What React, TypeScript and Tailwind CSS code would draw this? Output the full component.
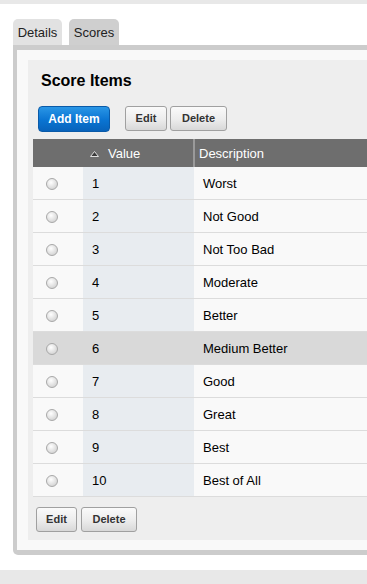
import React from "react";

const rows = [
  ["1", "Worst"],
  ["2", "Not Good"],
  ["3", "Not Too Bad"],
  ["4", "Moderate"],
  ["5", "Better"],
  ["6", "Medium Better"],
  ["7", "Good"],
  ["8", "Great"],
  ["9", "Best"],
  ["10", "Best of All"],
];

function Radio() {
  return (
    <span className="block w-[12px] h-[12px] rounded-full border border-[#a8a8a8] bg-[radial-gradient(circle_at_40%_35%,#ffffff_0%,#e6e6e6_45%,#c8c8c8_100%)]" />
  );
}

function GrayButton({ children, w }: { children: React.ReactNode; w: string }) {
  return (
    <button
      className={`${w} h-[25px] rounded-[3px] border border-[#a0a0a0] bg-[linear-gradient(#fafafa,#ececec_55%,#d8d8d8)] text-[11px] font-bold text-[#333] leading-none`}
    >
      {children}
    </button>
  );
}

export default function App() {
  return (
    <div
      className="w-[367px] h-[584px] bg-white overflow-hidden flex flex-col"
      style={{ fontFamily: '"Liberation Sans", Arial, sans-serif' }}
    >
      <div className="h-[4px] bg-[#e8e8e8] shrink-0" />
      <div className="pt-[15px] pl-[13px] shrink-0">
        <div className="flex gap-[7px] h-[26px] items-end">
          <div className="w-[49px] h-[26px] rounded-t-[5px] bg-[#e2e2e2] text-[13px] text-[#222] flex items-center justify-center pt-[1px]">
            Details
          </div>
          <div className="w-[50px] h-[26px] rounded-t-[5px] bg-[#cfcfcf] text-[13px] text-[#222] flex items-center justify-center pt-[1px]">
            Scores
          </div>
        </div>
        <div className="border-t-[5px] border-b-[5px] border-l-[4px] border-[#cccccc] rounded-bl-[5px] bg-[#f9f9f9] pt-[10px] pb-[10px] pl-[11px]">
          <div className="bg-[#eeeeee] pt-[12px] pb-[8px]">
            <div className="pl-[13px] text-[16px] font-bold leading-[18px] text-black">Score Items</div>
            <div className="flex items-start mt-[16px] pl-[10px]">
              <button className="w-[72px] h-[26px] rounded-[4px] border border-[#0a5aa8] bg-[linear-gradient(#2a96e6,#0a74d2_55%,#0863bb)] text-white text-[12px] font-bold leading-none">
                Add Item
              </button>
              <div className="ml-[15px] flex gap-[3px]">
                <GrayButton w="w-[42px]">Edit</GrayButton>
                <GrayButton w="w-[57px]">Delete</GrayButton>
              </div>
            </div>
            <div className="mt-[7px] ml-[5px]">
              <div className="flex h-[28px] bg-[#6e6e6e] text-white text-[13px]">
                <div className="w-[50px]" />
                <div className="w-[110px] flex items-center pt-[1px]">
                  <svg width="9" height="6" viewBox="0 0 9 6" className="ml-[7px]">
                    <polygon points="4.5,0.5 8.5,5.5 0.5,5.5" fill="#3a3a3a" stroke="#e0e0e0" strokeWidth="1" />
                  </svg>
                  <span className="ml-[9px]">Value</span>
                </div>
                <div className="w-[2px] bg-[#9a9a9a]" />
                <div className="flex-1 flex items-center pl-[4px] pt-[1px]">Description</div>
              </div>
              {rows.map(([v, d]) => {
                const hl = v === "6";
                return (
                  <div key={v} className="flex h-[33px] border-b border-[#dcdcdc] text-[13px] text-black">
                    <div className={`w-[50px] flex items-center pl-[13px] pt-[2px] ${hl ? "bg-[#d9d9d9]" : "bg-[#f9f9f9]"}`}>
                      <Radio />
                    </div>
                    <div className={`w-[111px] flex items-center pl-[9px] pt-[2px] ${hl ? "bg-[#d9d9d9]" : "bg-[#e8ecf0]"}`}>{v}</div>
                    <div className={`flex-1 flex items-center pl-[9px] pt-[2px] ${hl ? "bg-[#d9d9d9]" : "bg-[#f9f9f9]"}`}>{d}</div>
                  </div>
                );
              })}
            </div>
            <div className="flex gap-[4px] mt-[10px] ml-[8px]">
              <GrayButton w="w-[41px]">Edit</GrayButton>
              <GrayButton w="w-[56px]">Delete</GrayButton>
            </div>
          </div>
        </div>
      </div>
      <div className="h-[15px] shrink-0" />
      <div className="flex-1 bg-[#e8e8e8]" />
    </div>
  );
}
